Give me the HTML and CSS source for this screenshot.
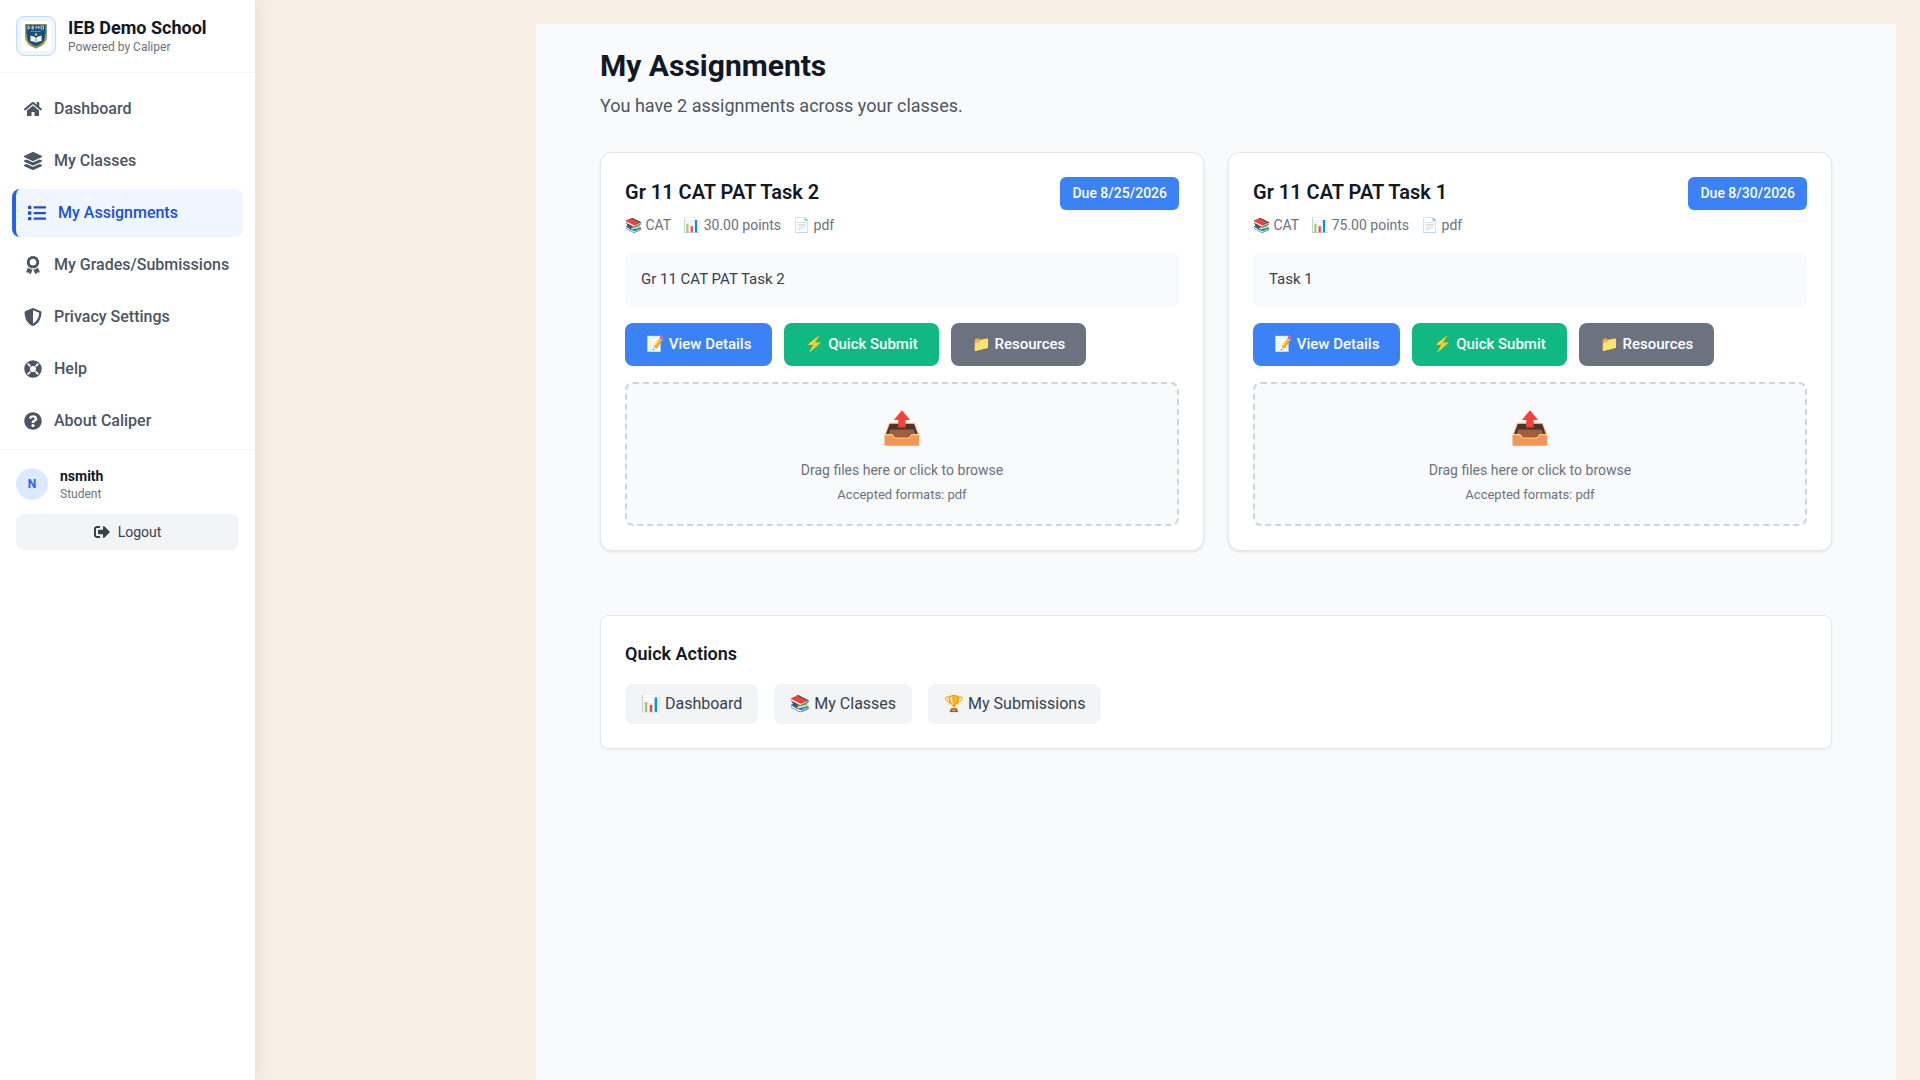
FILE: index.html
```html
<!DOCTYPE html>
<html lang="en">
<head>
<meta charset="UTF-8">
<meta name="viewport" content="width=device-width, initial-scale=1">
<title>My Assignments - IEB Demo School</title>
<link rel="stylesheet" href="styles.css">
</head>
<body>

<aside class="sidebar">
  <div class="brand">
    <div class="brand-logo">
      <svg viewBox="0 0 30 30" width="30" height="30" aria-hidden="true">
        <rect width="30" height="30" rx="2" fill="#fff"/>
        <path d="M4.500 3h21v12.500c0 5.500-4.500 9.500-10.500 11.500C9 25 4.500 21 4.500 15.500z" fill="#17507f"/>
        <path d="M5 13v2.500c0 5.200 4.300 9 10 11 5.700-2 10-5.800 10-11V13" fill="none" stroke="#a59a45" stroke-width="2"/>
        <path d="M5 3.500h20v10M5 3.500v10" fill="none" stroke="#8d8f55" stroke-width="1"/>
        <path d="M7 5v3h1q1-1.500 0-3zM13 5h-2v3h2M11 6.500h2M15 8V5l1.500 2L18 5v3M20 5h2.500v3H20z" fill="none" stroke="#c3d6e4" stroke-width="0.900"/>
        <path d="M10 10.500h10" stroke="#7fa3bf" stroke-width="1.200" stroke-dasharray="1.500 0.500"/>
        <path d="M9.500 14.500l4.500 1.500 1 1 1-1 4.500-1.500v5.500l-4.500 1-1 1-1-1-4.500-1z" fill="#f2f7fa"/>
        <path d="M15 16.500v5" stroke="#17507f" stroke-width="0.600"/>
        <circle cx="15" cy="13.500" r="1.300" fill="#e2c14a"/>
      </svg>
    </div>
    <div>
      <div class="brand-name">IEB Demo School</div>
      <div class="brand-sub">Powered by Caliper</div>
    </div>
  </div>

  <nav class="nav">
    <a href="#" class="nav-item">
      <svg viewBox="0 0 576 512"><path d="M280.37 148.26L96 300.11V464a16 16 0 0 0 16 16l112.06-.29a16 16 0 0 0 15.92-16V368a16 16 0 0 1 16-16h64a16 16 0 0 1 16 16v95.64a16 16 0 0 0 16 16.05L464 480a16 16 0 0 0 16-16V300L295.67 148.26a12.19 12.19 0 0 0-15.3 0zM571.6 251.47L488 182.56V44.05a12 12 0 0 0-12-12h-56a12 12 0 0 0-12 12v72.61L318.47 43a48 48 0 0 0-61 0L4.34 251.47a12 12 0 0 0-1.6 16.9l25.5 31A12 12 0 0 0 45.15 301l235.22-193.74a12.19 12.19 0 0 1 15.3 0L530.9 301a12 12 0 0 0 16.9-1.6l25.5-31a12 12 0 0 0-1.7-16.93z"/></svg>
      <span>Dashboard</span>
    </a>
    <a href="#" class="nav-item">
      <svg viewBox="0 0 512 512"><path d="M12.41 148.02l232.94 105.67c6.8 3.09 14.49 3.09 21.29 0l232.94-105.67c16.55-7.51 16.55-32.52 0-40.03L266.65 2.31a25.607 25.607 0 0 0-21.29 0L12.41 107.98c-16.55 7.51-16.55 32.53 0 40.04zm487.18 88.28l-58.09-26.33-161.64 73.27c-7.56 3.43-15.59 5.17-23.86 5.17s-16.29-1.74-23.86-5.17L70.51 209.97l-58.1 26.33c-16.55 7.5-16.55 32.5 0 40l232.94 105.59c6.8 3.08 14.49 3.08 21.29 0L499.59 276.3c16.55-7.5 16.55-32.5 0-40zm0 127.8l-57.87-26.23-161.86 73.37c-7.56 3.43-15.59 5.17-23.86 5.17s-16.29-1.74-23.86-5.17L70.29 337.87 12.41 364.1c-16.55 7.5-16.55 32.5 0 40l232.94 105.59c6.8 3.08 14.49 3.08 21.29 0L499.59 404.1c16.55-7.5 16.55-32.5 0-40z"/></svg>
      <span>My Classes</span>
    </a>
    <a href="#" class="nav-item active">
      <svg viewBox="0 0 512 512"><path d="M80 368H16a16 16 0 0 0-16 16v64a16 16 0 0 0 16 16h64a16 16 0 0 0 16-16v-64a16 16 0 0 0-16-16zm0-320H16A16 16 0 0 0 0 64v64a16 16 0 0 0 16 16h64a16 16 0 0 0 16-16V64a16 16 0 0 0-16-16zm0 160H16a16 16 0 0 0-16 16v64a16 16 0 0 0 16 16h64a16 16 0 0 0 16-16v-64a16 16 0 0 0-16-16zm416 176H176a16 16 0 0 0-16 16v32a16 16 0 0 0 16 16h320a16 16 0 0 0 16-16v-32a16 16 0 0 0-16-16zm0-320H176a16 16 0 0 0-16 16v32a16 16 0 0 0 16 16h320a16 16 0 0 0 16-16V80a16 16 0 0 0-16-16zm0 160H176a16 16 0 0 0-16 16v32a16 16 0 0 0 16 16h320a16 16 0 0 0 16-16v-32a16 16 0 0 0-16-16z"/></svg>
      <span>My Assignments</span>
    </a>
    <a href="#" class="nav-item">
      <svg viewBox="0 0 384 512"><path d="M97.12 362.63c-8.69-8.69-4.16-6.24-25.12-11.85-9.51-2.55-17.87-7.45-25.43-13.32L1.2 448.7c-4.39 10.77 3.81 22.47 15.43 22.03l52.69-2.01L105.56 507c8 8.44 22.04 5.81 26.43-4.96l52.05-127.62c-10.84 6.04-22.87 9.58-35.31 9.58-19.5 0-37.82-7.59-51.61-21.37zM382.8 448.7l-45.37-111.24c-7.56 5.88-15.92 10.77-25.43 13.32-21.07 5.64-16.45 3.18-25.12 11.85-13.79 13.78-32.12 21.37-51.62 21.37-12.44 0-24.47-3.55-35.31-9.58L252 502.04c4.39 10.77 18.44 13.4 26.43 4.96l36.25-38.28 52.69 2.01c11.62.44 19.82-11.27 15.43-22.03zM263 340c15.28-15.55 17.03-14.21 38.79-20.14 13.89-3.79 24.75-14.84 28.47-28.98 7.48-28.4 5.54-24.97 25.95-45.75 10.17-10.35 14.14-25.44 10.42-39.58-7.47-28.38-7.48-24.42 0-52.83 3.72-14.14-.25-29.23-10.42-39.58-20.41-20.78-18.47-17.36-25.95-45.75-3.72-14.14-14.58-25.19-28.47-28.98-27.88-7.61-24.52-5.62-44.95-26.41-10.17-10.35-25-14.4-38.89-10.61-27.87 7.6-23.98 7.61-51.9 0-13.89-3.79-28.72.25-38.89 10.61-20.41 20.78-17.05 18.8-44.94 26.41-13.89 3.79-24.75 14.84-28.47 28.98-7.47 28.39-5.54 24.97-25.95 45.75-10.17 10.35-14.15 25.44-10.42 39.58 7.47 28.36 7.48 24.4 0 52.82-3.72 14.14.25 29.23 10.42 39.59 20.41 20.78 18.47 17.35 25.95 45.75 3.72 14.14 14.58 25.19 28.47 28.98C104.6 325.96 106.27 325 121 340c13.23 13.47 33.84 15.88 49.74 5.82a39.676 39.676 0 0 1 42.53 0c15.89 10.06 36.5 7.65 49.73-5.82zM97.66 175.96c0-53.03 42.24-96.02 94.34-96.02s94.34 42.99 94.34 96.02-42.24 96.02-94.34 96.02-94.34-42.99-94.34-96.02z"/></svg>
      <span>My Grades/Submissions</span>
    </a>
    <a href="#" class="nav-item">
      <svg viewBox="0 0 512 512"><path d="M466.5 83.7l-192-80a48.15 48.15 0 0 0-36.9 0l-192 80C27.7 91.1 16 108.6 16 128c0 198.5 114.5 335.7 221.5 380.3 11.8 4.9 25.1 4.9 36.9 0C360.1 472.6 496 349.3 496 128c0-19.4-11.7-36.9-29.5-44.3zM256.1 446.3l-.1-381 175.9 73.3c-3.3 151.4-82.1 261.1-175.8 307.7z"/></svg>
      <span>Privacy Settings</span>
    </a>
    <a href="#" class="nav-item">
      <svg viewBox="0 0 512 512"><circle cx="256" cy="256" r="168" fill="none" stroke="currentColor" stroke-width="160"/><path d="M118 118l50 50M394 118l-50 50M118 394l50-50M394 394l-50-50" stroke="#fff" stroke-width="52" stroke-linecap="round"/></svg>
      <span>Help</span>
    </a>
    <a href="#" class="nav-item">
      <svg viewBox="0 0 512 512"><path d="M504 256c0 136.997-111.043 248-248 248S8 392.997 8 256C8 119.083 119.043 8 256 8s248 111.083 248 248zM262.655 90c-54.497 0-89.255 22.957-116.549 63.758-3.536 5.286-2.353 12.415 2.715 16.258l34.699 26.31c5.205 3.947 12.621 3.008 16.665-2.122 17.864-22.658 30.113-35.797 57.303-35.797 20.429 0 45.698 13.148 45.698 32.958 0 14.976-12.363 22.667-32.534 33.976C247.128 238.528 216 254.941 216 296v4c0 6.627 5.373 12 12 12h56c6.627 0 12-5.373 12-12v-1.333c0-28.462 83.186-29.647 83.186-106.667 0-58.002-60.165-102-116.531-102zM256 338c-25.365 0-46 20.635-46 46 0 25.364 20.635 46 46 46s46-20.636 46-46c0-25.365-20.635-46-46-46z"/></svg>
      <span>About Caliper</span>
    </a>
  </nav>

  <div class="user">
    <div class="user-row">
      <div class="avatar">N</div>
      <div>
        <div class="user-name">nsmith</div>
        <div class="user-role">Student</div>
      </div>
    </div>
    <button type="button" class="logout">
      <svg viewBox="0 0 512 512"><path d="M497 273L329 441c-15 15-41 4.500-41-17v-96H152c-13.300 0-24-10.700-24-24v-96c0-13.300 10.700-24 24-24h136V88c0-21.400 25.900-32 41-17l168 168c9.300 9.400 9.300 24.600 0 34zM192 436v-40c0-6.600-5.400-12-12-12H96c-17.700 0-32-14.300-32-32V160c0-17.700 14.300-32 32-32h84c6.600 0 12-5.400 12-12V76c0-6.600-5.400-12-12-12H96c-53 0-96 43-96 96v192c0 53 43 96 96 96h84c6.600 0 12-5.400 12-12z"/></svg>
      Logout
    </button>
  </div>
</aside>

<main class="content">
  <header class="page-header">
    <h1>My Assignments</h1>
    <p>You have 2 assignments across your classes.</p>
  </header>

  <div class="cards">
    <section class="card">
      <div class="card-head">
        <div>
          <h2>Gr 11 CAT PAT Task 2</h2>
          <div class="meta">
            <span>📚 CAT</span>
            <span>📊 30.00 points</span>
            <span>📄 pdf</span>
          </div>
        </div>
        <span class="due">Due 8/25/2026</span>
      </div>
      <div class="desc">Gr 11 CAT PAT Task 2</div>
      <div class="actions">
        <button type="button" class="btn blue">📝 View Details</button>
        <button type="button" class="btn green">⚡ Quick Submit</button>
        <button type="button" class="btn gray">📁 Resources</button>
      </div>
      <button type="button" class="dropzone">
        <span class="drop-icon">📤</span>
        <span class="drop-text">Drag files here or click to browse</span>
        <span class="drop-hint">Accepted formats: pdf</span>
      </button>
    </section>

    <section class="card">
      <div class="card-head">
        <div>
          <h2>Gr 11 CAT PAT Task 1</h2>
          <div class="meta">
            <span>📚 CAT</span>
            <span>📊 75.00 points</span>
            <span>📄 pdf</span>
          </div>
        </div>
        <span class="due">Due 8/30/2026</span>
      </div>
      <div class="desc">Task 1</div>
      <div class="actions">
        <button type="button" class="btn blue">📝 View Details</button>
        <button type="button" class="btn green">⚡ Quick Submit</button>
        <button type="button" class="btn gray">📁 Resources</button>
      </div>
      <button type="button" class="dropzone">
        <span class="drop-icon">📤</span>
        <span class="drop-text">Drag files here or click to browse</span>
        <span class="drop-hint">Accepted formats: pdf</span>
      </button>
    </section>
  </div>

  <section class="quick">
    <h3>Quick Actions</h3>
    <div class="quick-links">
      <a href="#">📊 Dashboard</a>
      <a href="#">📚 My Classes</a>
      <a href="#">🏆 My Submissions</a>
    </div>
  </section>
</main>

</body>
</html>
```
FILE: styles.css
```css
* {
  box-sizing: border-box;
}

body {
  margin: 0;
  min-height: 100vh;
  display: flex;
  background-color: #f7eee4;
  font-family: Roboto, "Liberation Sans", sans-serif;
  font-size: 16px;
  line-height: 24px;
  color: #111827;
}

h1, h2, h3, p {
  margin: 0;
}

a {
  text-decoration: none;
}

button {
  font-family: inherit;
  cursor: pointer;
}

/* Sidebar */
.sidebar {
  width: 256px;
  flex-shrink: 0;
  background-color: #fff;
  border-right: 1px solid #e5e7eb;
  box-shadow: 4px 0 12px rgba(0, 0, 0, 0.05);
}

.brand {
  display: flex;
  align-items: center;
  gap: 12px;
  padding: 16px;
  border-bottom: 1px solid #f3f4f6;
}

.brand-logo {
  width: 40px;
  height: 40px;
  display: flex;
  align-items: center;
  justify-content: center;
  background-color: #eff6ff;
  border: 1px solid #bfdbfe;
  border-radius: 8px;
}

.brand-name {
  font-size: 18px;
  font-weight: 700;
  line-height: 22px;
}

.brand-sub {
  font-size: 12px;
  line-height: 16px;
  color: #6b7280;
}

.nav {
  display: flex;
  flex-direction: column;
  gap: 4px;
  padding: 12px 12px 4px;
}

.nav-item {
  display: flex;
  align-items: center;
  gap: 12px;
  padding: 12px;
  border-radius: 8px;
  font-weight: 500;
  color: #4b5563;
}

.nav-item svg {
  width: 18px;
  height: 18px;
  fill: currentColor;
}

.nav-item.active {
  background-color: #eff6ff;
  border-left: 4px solid #2563eb;
  color: #1d4ed8;
}

.user {
  padding: 16px;
  border-top: 1px solid #f3f4f6;
}

.user-row {
  display: flex;
  align-items: center;
  gap: 12px;
  margin-bottom: 12px;
}

.avatar {
  width: 32px;
  height: 32px;
  border-radius: 50%;
  background-color: #dbeafe;
  color: #2563eb;
  font-size: 12px;
  font-weight: 700;
  line-height: 32px;
  text-align: center;
}

.user-name {
  font-size: 14px;
  font-weight: 700;
  line-height: 20px;
}

.user-role {
  font-size: 12px;
  line-height: 16px;
  color: #6b7280;
}

.logout {
  display: flex;
  align-items: center;
  justify-content: center;
  gap: 8px;
  width: 100%;
  padding: 8px;
  border: none;
  border-radius: 8px;
  background-color: #f3f4f6;
  color: #374151;
  font-size: 14px;
  line-height: 20px;
}

.logout svg {
  width: 16px;
  height: 16px;
  fill: currentColor;
}

/* Main panel */
.content {
  flex: 1;
  margin: 24px 24px 0 280px;
  padding: 24px 64px;
  background-color: #f9fafc;
}

.page-header {
  margin-bottom: 32px;
}

.page-header h1 {
  font-size: 30px;
  line-height: 36px;
  margin-bottom: 8px;
}

.page-header p {
  font-size: 18px;
  line-height: 28px;
  color: #4b5563;
}

.cards {
  display: grid;
  grid-template-columns: 1fr 1fr;
  gap: 24px;
  margin-bottom: 64px;
}

.card {
  padding: 24px;
  background-color: #fff;
  border: 1px solid #e5e7eb;
  border-radius: 12px;
  box-shadow: 0 1px 3px rgba(0, 0, 0, 0.1);
}

.card-head {
  display: flex;
  justify-content: space-between;
  align-items: flex-start;
  margin-bottom: 16px;
}

.card-head h2 {
  font-size: 20px;
  font-weight: 600;
  line-height: 30px;
  margin-bottom: 8px;
}

.meta {
  display: flex;
  gap: 12px;
  font-size: 14px;
  line-height: 21px;
  color: #6b7280;
}

.due {
  padding: 6px 12px;
  border-radius: 6px;
  background-color: #3b82f6;
  color: #fff;
  font-size: 14px;
  font-weight: 500;
  line-height: 21px;
}

.desc {
  padding: 16px;
  margin-bottom: 16px;
  border-radius: 8px;
  background-color: #f9fafb;
  color: #374151;
  font-size: 15px;
  line-height: 23px;
}

.actions {
  display: flex;
  gap: 12px;
  margin-bottom: 16px;
}

.btn {
  padding: 10px 21px;
  border: none;
  border-radius: 8px;
  color: #fff;
  font-size: 15px;
  font-weight: 500;
  line-height: 23px;
}

.blue {
  background-color: #3b82f6;
}

.green {
  background-color: #10b981;
}

.gray {
  background-color: #6b7280;
}

.dropzone {
  display: flex;
  flex-direction: column;
  align-items: center;
  width: 100%;
  padding: 24px 24px 20px;
  border: 2px dashed #d1d5db;
  border-radius: 8px;
  background-color: #f9fafb;
  color: #6b7280;
}

.drop-icon {
  font-size: 32px;
  line-height: 40px;
  margin-bottom: 12px;
}

.drop-text {
  font-size: 14px;
  line-height: 20px;
  margin-bottom: 6px;
}

.drop-hint {
  font-size: 13px;
  line-height: 18px;
}

/* Quick actions */
.quick {
  padding: 24px;
  background-color: #fff;
  border: 1px solid #e5e7eb;
  border-radius: 8px;
  box-shadow: 0 1px 2px rgba(0, 0, 0, 0.05);
}

.quick h3 {
  font-size: 18px;
  font-weight: 600;
  line-height: 28px;
  margin-bottom: 16px;
}

.quick-links {
  display: flex;
  gap: 16px;
}

.quick-links a {
  padding: 8px 16px;
  border-radius: 8px;
  background-color: #f3f4f6;
  color: #374151;
}
```
